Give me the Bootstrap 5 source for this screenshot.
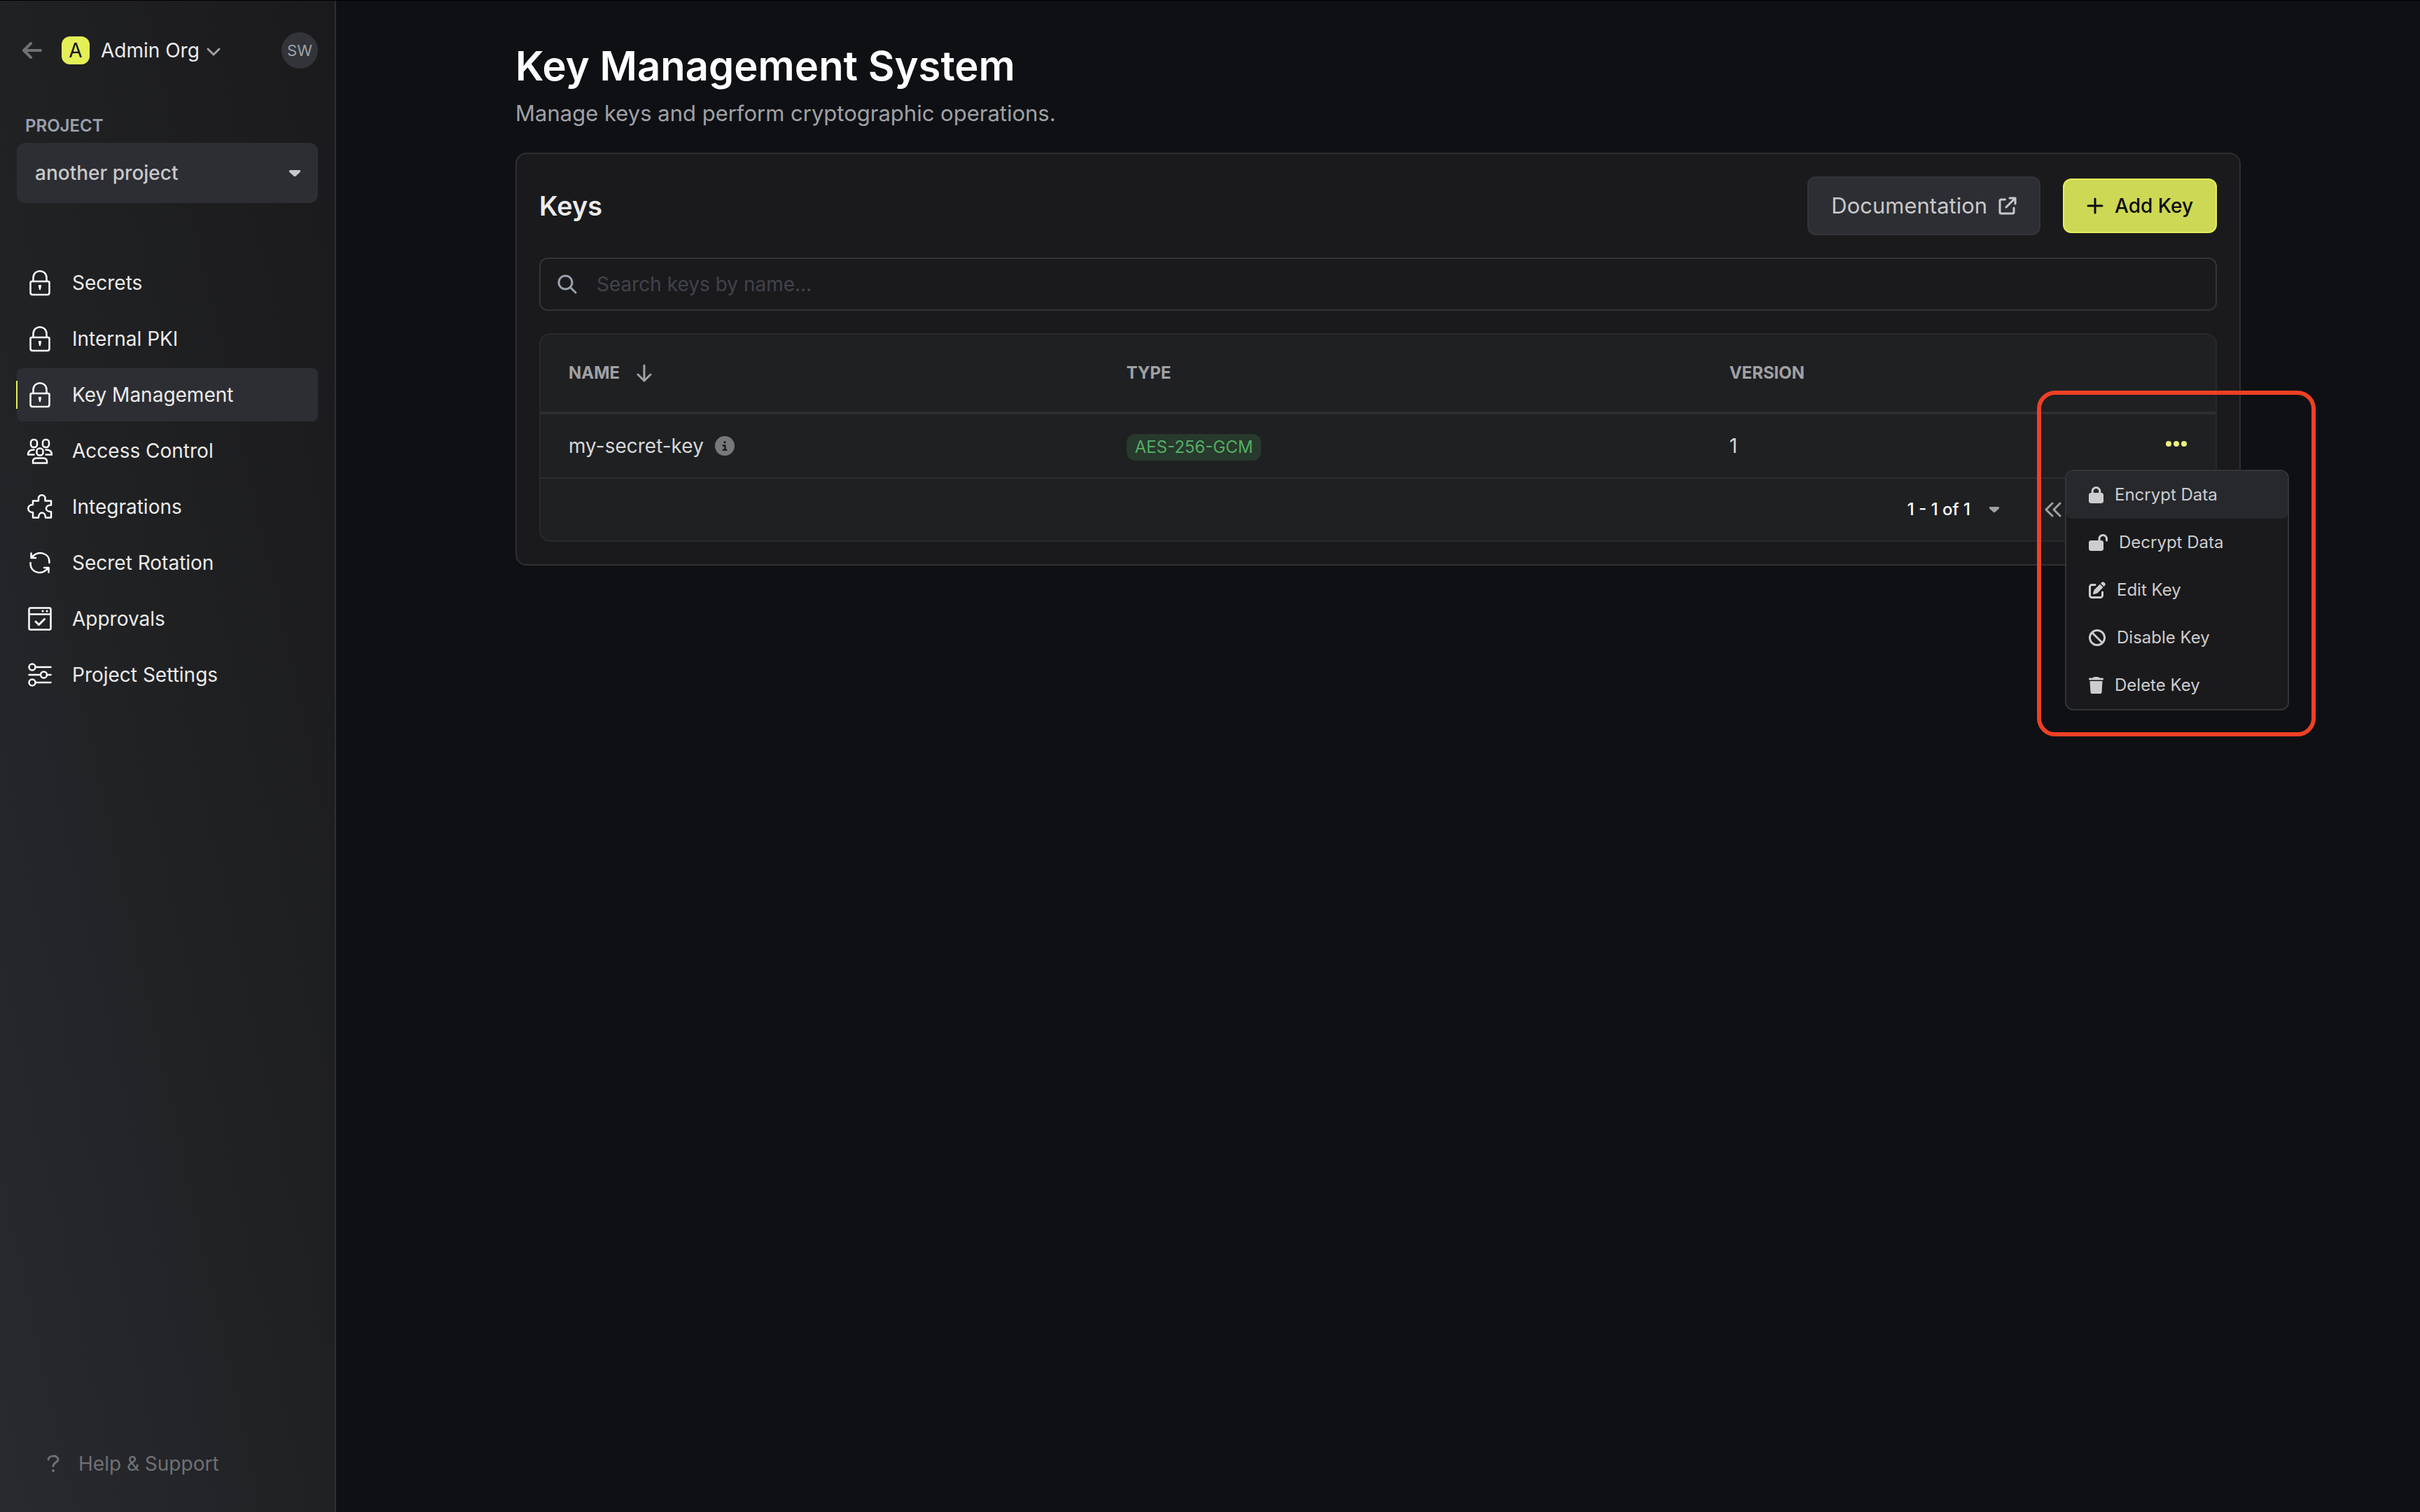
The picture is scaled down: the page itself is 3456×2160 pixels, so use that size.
<!DOCTYPE html>
<html lang="en">
<head>
<meta charset="utf-8">
<meta name="viewport" content="width=device-width, initial-scale=1">
<title>Key Management System</title>
<link href="https://cdn.jsdelivr.net/npm/bootstrap@5.3.0/dist/css/bootstrap.min.css" rel="stylesheet">
<style>
body { background: #0e1014; color: #ebebeb; font-family: Inter, "Liberation Sans", sans-serif; font-size: 28px; line-height: 40px; border-top: 1px solid #000; }
svg { display: block; flex: none; }
.icon-line { fill: none; stroke: currentColor; stroke-linecap: round; stroke-linejoin: round; }
.plain-btn { background: none; border: 0; padding: 0; color: inherit; }

/* sidebar */
.side-panel { width: 480px; flex: none; padding: 45px 24px 50px; border-right: 2px solid #2d2f33; background: linear-gradient(to top right, #292a2f, #202123 50%, #1a1a1c); }
.side-head { height: 52px; padding-left: 8px; }
.back-link { color: #707174; margin-right: 28px; }
.org-badge { width: 40px; height: 40px; border-radius: 12px; background: #e4ef58; color: #0e1014; font-size: 28px; }
.org-name { margin-left: 16px; gap: 10px; }
.avatar-btn { width: 52px; height: 52px; border-radius: 50%; background: #323439; color: #a0a1a4; font-size: 22px; }
.project-label { margin: 64px 0 6px 12px; font-size: 24px; line-height: 36px; font-weight: 600; color: #9aa0ae; }
.project-box { position: relative; }
.project-select { height: 86px; padding: 0 64px 0 26px; border: 0; border-radius: 12px; background: #2d2e33; color: #c8c8ca; font-size: 28px; font-weight: 500; }
.project-caret { position: absolute; right: 24px; top: 38px; color: #c8c8ca; pointer-events: none; }
.side-nav { margin-top: 76px; gap: 4px; }
.side-nav .nav-link { position: relative; height: 76px; padding: 0 12px; gap: 25px; border-radius: 8px; color: #ebebeb; }
.side-nav .nav-link svg { color: #fff; stroke-width: 3; }
.side-nav .nav-link.active { background: #2d2e33; }
.side-nav .nav-link.active::before { content: ""; position: absolute; left: -1px; top: 18px; width: 2px; height: 40px; background: #e4ef58; }
.help-link { padding-left: 42px; gap: 26px; color: #707174; }

/* page */
.page-wrap { max-width: 2560px; padding: 57px 48px 48px; }
.page-title { font-size: 58px; line-height: 72px; font-weight: 600; color: #fff; margin-bottom: 8px; }
.page-note { font-size: 31px; line-height: 48px; color: #a0a1a4; margin-bottom: 32px; }
.key-panel { padding: 32px; border: 2px solid #2d2f33; border-radius: 16px; background: #1a1a1c; }
.panel-title { font-size: 38px; line-height: 56px; font-weight: 600; color: #ebebeb; }
.panel-actions { gap: 32px; }
.doc-btn { height: 84px; padding: 0 32px; gap: 16px; border: 2px solid #323439; border-radius: 12px; background: #2d2e33; color: #c8c8ca; font-size: 31px; }
.add-btn { height: 78px; padding: 0 32px; gap: 16px; border: 2px solid #e4ef58; border-radius: 12px; background: #cdd854; color: #0a0b0d; font-size: 28px; font-weight: 500; }
.search-box { height: 76px; margin: 32px 0; padding: 0 24px; gap: 28px; border: 2px solid #32343a; border-radius: 12px; color: #9aa0ae; }
.search-box .form-control { background: none; border: 0; padding: 0; font-size: 28px; line-height: 40px; color: #ebebeb; box-shadow: none; }
.search-box .form-control::placeholder { color: #41424b; opacity: 1; }
.table-frame { border: 2px solid #27292c; border-radius: 16px; background: #1f2022; }
.key-table { --bs-table-bg: transparent; table-layout: fixed; border-collapse: separate; border-spacing: 0; color: #d6d6d8; }
.key-table > :not(caption) > * > * { padding: 0 40px; border: 0 solid #2d2f33; color: inherit; vertical-align: middle; }
.key-table > thead > tr > th { height: 114px; border-bottom-width: 4px; font-size: 24px; font-weight: 700; color: #a0a1a4; }
.key-table > tbody > tr > td { height: 92px; border-bottom-width: 2px; }
.col-key-name { width: 33.3%; }
.col-key-type { width: 36%; }
.col-key-menu { width: 10%; }
.algo-tag { display: inline-block; padding: 0 12px; border-radius: 12px; background: #28392d; color: #53ad64; font-size: 24px; line-height: 38px; }
.pager { height: 88px; padding-right: 220px; gap: 64px; color: #a0a1a4; }
.pager-size { font-size: 24px; font-weight: 500; color: #fff; gap: 26px; }

/* row menu floats over the table */
.row-menu { position: relative; width: 32px; color: #ecf17f; }
.menu-list { position: absolute; z-index: 2; top: 50px; right: -145px; width: 320px; border: 2px solid #323439; border-radius: 12px; background: #1a1a1c; overflow: hidden; }
.menu-list .menu-entry { width: 100%; height: 68px; padding: 0 32px; gap: 16px; color: #cdcdcf; font-size: 24px; text-align: left; }
.menu-list .menu-entry svg { fill: currentColor; }
.menu-list .menu-entry.current { background: #27282c; border-radius: 0 0 8px 8px; }
.callout { position: absolute; z-index: 3; top: -63px; right: -183px; width: 398px; height: 494px; border: 6px solid #ee4025; border-radius: 26px; pointer-events: none; }
</style>
</head>
<body>
<svg class="d-none" aria-hidden="true">
  <symbol id="lock-line" viewBox="0 0 40 40"><path d="M8.500 18H31.500Q33.500 18 33.500 20V34Q33.500 37 30.500 37H9.500Q6.500 37 6.500 34V20Q6.500 18 8.500 18ZM10.500 18V13C10.500 0 29.500 0 29.500 13V18" stroke-width="2.500"/><path d="M20 25V29" stroke-width="2.500"/><circle cx="20" cy="25" r="1" stroke-width="2.500"/></symbol>
</svg>
<div class="d-flex min-vh-100">
  <aside class="side-panel d-flex flex-column">
    <div class="side-head d-flex align-items-center">
      <a class="back-link" href="#" aria-label="Back"><svg class="icon-line" width="28" height="24" viewBox="0 0 28 24" stroke-width="4"><path d="M26 12H2M12 2L2 12L12 22"/></svg></a>
      <span class="org-badge d-flex align-items-center justify-content-center">A</span>
      <button class="plain-btn org-name d-flex align-items-center" type="button">Admin Org <svg class="icon-line mt-1" width="20" height="14" viewBox="0 0 20 14" stroke-width="3"><path stroke="#a0a1a4" d="M2 3L10 11L18 3"/></svg></button>
      <button class="plain-btn avatar-btn ms-auto" type="button">SW</button>
    </div>
    <label class="project-label" for="project">PROJECT</label>
    <div class="project-box">
      <select class="form-select project-select" id="project"><option>another project</option></select>
      <svg class="project-caret" width="18" height="11" viewBox="0 0 18 11"><path fill="currentColor" d="M2 1H16Q18 2 16.500 4L10.500 9.500Q9 11 7.500 9.500L1.500 4Q0 2 2 1Z"/></svg>
    </div>
    <nav class="nav flex-column flex-nowrap side-nav">
      <a class="nav-link d-flex align-items-center" href="#"><svg class="icon-line" width="42" height="40" viewBox="0 0 40 40"><use href="#lock-line"/></svg>Secrets</a>
      <a class="nav-link d-flex align-items-center" href="#"><svg class="icon-line" width="42" height="40" viewBox="0 0 40 40"><use href="#lock-line"/></svg>Internal PKI</a>
      <a class="nav-link active d-flex align-items-center" href="#" aria-current="page"><svg class="icon-line" width="42" height="40" viewBox="0 0 40 40"><use href="#lock-line"/></svg>Key Management</a>
      <a class="nav-link d-flex align-items-center" href="#"><svg class="icon-line" width="42" height="40" viewBox="0 0 40 40"><g stroke-width="2.500"><rect x="7" y="4" width="9" height="11" rx="4"/><rect x="24" y="4" width="9" height="11" rx="4"/><rect x="15.500" y="16.500" width="9" height="10" rx="4"/><path d="M11.500 18.500C6 18.500 3 21 3 25.500H11.500M28.500 18.500C34 18.500 37 21 37 25.500H28.500M10 37.500V35Q10 30.500 16 30.500H24Q30 30.500 30 35V37.500Z"/></g></svg>Access Control</a>
      <a class="nav-link d-flex align-items-center" href="#"><svg class="icon-line" width="42" height="40" viewBox="0 0 40 40"><path stroke-width="2.500" d="M10 17V11.500H18V8C18 1.500 27.500 1.500 27.500 8V11.500H36V17.500C26.500 17.500 26.500 27 36 27V35.500H28C28 26 18 26 18 35.500H10V28C1 28 1 17 10 17Z"/></svg>Integrations</a>
      <a class="nav-link d-flex align-items-center" href="#"><svg class="icon-line" width="42" height="40" viewBox="0 0 40 40"><path stroke-width="2.500" d="M7.500 6.500V13H14M8 13C15 2 34 4 33.500 20M32.500 33.500V27H26M32 27C25 38 6 36 6.500 20"/></svg>Secret Rotation</a>
      <a class="nav-link d-flex align-items-center" href="#"><svg class="icon-line" width="42" height="40" viewBox="0 0 40 40"><rect stroke-width="2.500" x="4.500" y="4.500" width="31" height="31" rx="2"/><path stroke-width="2.500" d="M5 13.500H35"/><path d="M24 9H24.100M30 9H30.100M14 24L18.500 28.500L26.500 20.500"/></svg>Approvals</a>
      <a class="nav-link d-flex align-items-center" href="#"><svg class="icon-line" width="42" height="40" viewBox="0 0 40 40"><g stroke-width="2.500"><circle cx="9" cy="9" r="4.500"/><circle cx="25.500" cy="20" r="4.500"/><circle cx="9" cy="31" r="4.500"/><path d="M14 9H35.500M4.500 20H21M30 20H35.500M14 31H35.500"/></g></svg>Project Settings</a>
    </nav>
    <a class="help-link mt-auto d-flex align-items-center text-decoration-none" href="#"><svg class="icon-line" width="20" height="26" viewBox="0 0 20 26"><path stroke-width="3" d="M3 7C3 1 17 0 17 7C17 11 10 11 10 16.500"/><circle cx="10" cy="23" r="2" fill="currentColor" stroke="none"/></svg>Help &amp; Support</a>
  </aside>

  <main class="flex-grow-1">
    <div class="page-wrap mx-auto">
      <h1 class="page-title">Key Management System</h1>
      <p class="page-note">Manage keys and perform cryptographic operations.</p>

      <section class="key-panel">
        <div class="panel-actions d-flex align-items-center">
          <h2 class="panel-title mb-0 me-auto">Keys</h2>
          <a class="btn doc-btn d-flex align-items-center" href="#">Documentation <svg class="icon-line" width="26" height="26" viewBox="0 0 26 26" stroke-width="3"><path d="M9.500 4H4Q2 4 2 6V22Q2 24 4 24H20Q22 24 22 22V16M16 2H24V10M24 2L11 15"/></svg></a>
          <button class="btn add-btn d-flex align-items-center" type="button"><svg class="icon-line" width="24" height="24" viewBox="0 0 24 24" stroke-width="3"><path d="M12 2V22M2 12H22"/></svg>Add Key</button>
        </div>

        <div class="search-box d-flex align-items-center">
          <svg class="icon-line" width="28" height="28" viewBox="0 0 28 28" stroke-width="3"><circle cx="11.500" cy="11.500" r="9.500"/><path d="M18.500 18.500L26 26"/></svg>
          <input class="form-control" type="search" aria-label="Search keys" placeholder="Search keys by name...">
        </div>

        <div class="table-frame">
          <table class="table key-table mb-0">
            <colgroup><col class="col-key-name"><col class="col-key-type"><col><col class="col-key-menu"></colgroup>
            <thead>
              <tr>
                <th scope="col"><span class="d-flex align-items-center">NAME <svg class="icon-line ms-4" width="22" height="26" viewBox="0 0 22 26" stroke-width="3"><path d="M11 2V24M2 15L11 24L20 15"/></svg></span></th>
                <th scope="col">TYPE</th>
                <th scope="col">VERSION</th>
                <th scope="col"></th>
              </tr>
            </thead>
            <tbody>
              <tr>
                <td><span class="d-flex align-items-center gap-3">my-secret-key <svg width="28" height="28" viewBox="0 0 512 512" fill="#77787a"><path d="M256 512A256 256 0 1 0 256 0a256 256 0 1 0 0 512zM216 336h24V272H216c-13.300 0-24-10.700-24-24s10.700-24 24-24h48c13.300 0 24 10.700 24 24v88h8c13.300 0 24 10.700 24 24s-10.700 24-24 24H216c-13.300 0-24-10.700-24-24s10.700-24 24-24zm40-208a32 32 0 1 1 0 64 32 32 0 1 1 0-64z"/></svg></span></td>
                <td><span class="algo-tag">AES-256-GCM</span></td>
                <td>1</td>
                <td>
                  <div class="row-menu ms-auto">
                    <button class="plain-btn d-block" type="button" aria-label="Key actions"><svg width="32" height="32" viewBox="0 0 32 32" fill="currentColor"><circle cx="5" cy="13" r="4"/><circle cx="16" cy="13" r="4"/><circle cx="27" cy="13" r="4"/></svg></button>
                    <div class="menu-list">
                      <button class="plain-btn menu-entry current d-flex align-items-center" type="button"><svg width="21" height="24" viewBox="0 0 448 512"><path d="M144 144v48H304V144c0-44.200-35.800-80-80-80s-80 35.800-80 80zM80 192V144C80 64.500 144.500 0 224 0s144 64.500 144 144v48h16c35.300 0 64 28.700 64 64V448c0 35.300-28.700 64-64 64H64c-35.300 0-64-28.700-64-64V256c0-35.300 28.700-64 64-64H80z"/></svg>Encrypt Data</button>
                      <button class="plain-btn menu-entry d-flex align-items-center" type="button"><svg width="27" height="24" viewBox="0 0 576 512"><path d="M352 144c0-44.200 35.800-80 80-80s80 35.800 80 80v48c0 17.700 14.300 32 32 32s32-14.300 32-32V144C576 64.500 511.500 0 432 0S288 64.500 288 144v48H64c-35.300 0-64 28.700-64 64V448c0 35.300 28.700 64 64 64H384c35.300 0 64-28.700 64-64V256c0-35.300-28.700-64-64-64H352V144z"/></svg>Decrypt Data</button>
                      <button class="plain-btn menu-entry d-flex align-items-center" type="button"><svg width="24" height="24" viewBox="0 0 512 512"><path d="M471.600 21.700c-21.900-21.900-57.300-21.900-79.200 0L362.300 51.700l97.900 97.900 30.100-30.100c21.900-21.900 21.900-57.300 0-79.200L471.600 21.700zm-299.200 220c-6.100 6.100-10.800 13.600-13.500 21.900l-29.600 88.800c-2.900 8.600-.6 18.100 5.800 24.600s15.900 8.700 24.600 5.800l88.800-29.600c8.200-2.700 15.700-7.400 21.900-13.500L437.700 172.300 339.700 74.300 172.400 241.700zM96 64C43 64 0 107 0 160V416c0 53 43 96 96 96H352c53 0 96-43 96-96V320c0-17.700-14.300-32-32-32s-32 14.300-32 32v96c0 17.700-14.300 32-32 32H96c-17.700 0-32-14.300-32-32V160c0-17.700 14.300-32 32-32h96c17.700 0 32-14.300 32-32s-14.300-32-32-32H96z"/></svg>Edit Key</button>
                      <button class="plain-btn menu-entry d-flex align-items-center" type="button"><svg width="24" height="24" viewBox="0 0 512 512"><path d="M367.200 412.500L99.500 144.800C77.100 176.100 64 214.500 64 256c0 106 86 192 192 192c41.500 0 79.900-13.100 111.200-35.500zm45.300-45.300C434.900 335.900 448 297.500 448 256c0-106-86-192-192-192c-41.500 0-79.900 13.100-111.200 35.500L412.500 367.200zM0 256a256 256 0 1 1 512 0A256 256 0 1 1 0 256z"/></svg>Disable Key</button>
                      <button class="plain-btn menu-entry d-flex align-items-center" type="button"><svg width="21" height="24" viewBox="0 0 448 512"><path d="M135.200 17.700L128 32H32C14.300 32 0 46.300 0 64S14.300 96 32 96H416c17.700 0 32-14.300 32-32s-14.300-32-32-32H320l-7.200-14.300C307.400 6.800 296.300 0 284.200 0H163.800c-12.100 0-23.200 6.800-28.600 17.700zM416 128H32L53.200 467c1.600 25.300 22.600 45 47.900 45H346.900c25.300 0 46.300-19.700 47.900-45L416 128z"/></svg>Delete Key</button>
                    </div>
                    <div class="callout"></div>
                  </div>
                </td>
              </tr>
            </tbody>
          </table>
          <div class="pager d-flex align-items-center justify-content-end">
            <button class="plain-btn pager-size d-flex align-items-center" type="button">1 - 1 of 1 <svg width="16" height="10" viewBox="0 0 18 11"><path fill="#a0a1a4" d="M2 1H16Q18 2 16.500 4L10.500 9.500Q9 11 7.500 9.500L1.500 4Q0 2 2 1Z"/></svg></button>
            <button class="plain-btn" type="button" aria-label="First page"><svg class="icon-line" width="24" height="22" viewBox="0 0 24 22" stroke-width="3"><path d="M11 2L2 11L11 20M22 2L13 11L22 20"/></svg></button>
          </div>
        </div>
      </section>
    </div>
  </main>
</div>
<script src="https://cdn.jsdelivr.net/npm/bootstrap@5.3.0/dist/js/bootstrap.bundle.min.js"></script>
</body>
</html>
